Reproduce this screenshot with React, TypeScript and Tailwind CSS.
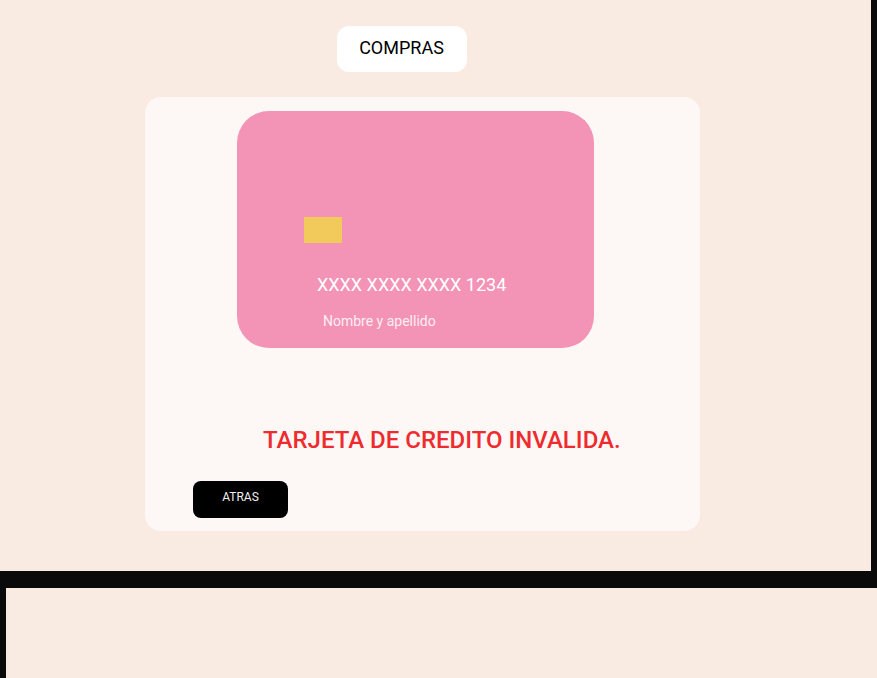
export default function App() {
  return (
    <div className="w-[877px] h-[678px] overflow-hidden bg-[#0a0a0a] font-['Roboto',sans-serif]">
      <div className="w-[871px] h-[571px] bg-[#faebe2] flex flex-col items-center">
        <div className="mt-[26px] ml-[-68px] w-[130px] h-[46px] rounded-xl bg-white flex items-center justify-center pb-[3px] text-[18px] text-black">
          COMPRAS
        </div>
        <div className="mt-[25px] ml-[-26px] w-[555px] h-[434px] rounded-2xl bg-[#fdf8f6] flex flex-col">
          <div className="ml-[92px] mt-[14px] w-[357px] h-[237px] rounded-[32px] bg-[#f393b5] flex flex-col">
            <div className="ml-[67px] mt-[106px] w-[38px] h-[26px] bg-[#f2ca5c]" />
            <div className="ml-[80px] mt-[31px] text-[18px] leading-[22px] text-white">XXXX XXXX XXXX 1234</div>
            <div className="ml-[86px] mt-[17px] text-[14px] leading-[16px] text-[#fdeef3]">Nombre y apellido</div>
          </div>
          <div className="ml-[118px] mt-[78px] text-[24px] leading-[28px] font-medium text-[#ee2b2e]">
            TARJETA DE CREDITO INVALIDA.
          </div>
          <div className="ml-[48px] mt-[27px] w-[95px] h-[37px] rounded-lg bg-black flex justify-center pt-[9px] text-[12px] leading-[14px] text-[#f0f0f0]">
            ATRAS
          </div>
        </div>
      </div>
      <div className="ml-[6px] mt-[17px] h-[200px] bg-[#faebe2]" />
    </div>
  );
}
